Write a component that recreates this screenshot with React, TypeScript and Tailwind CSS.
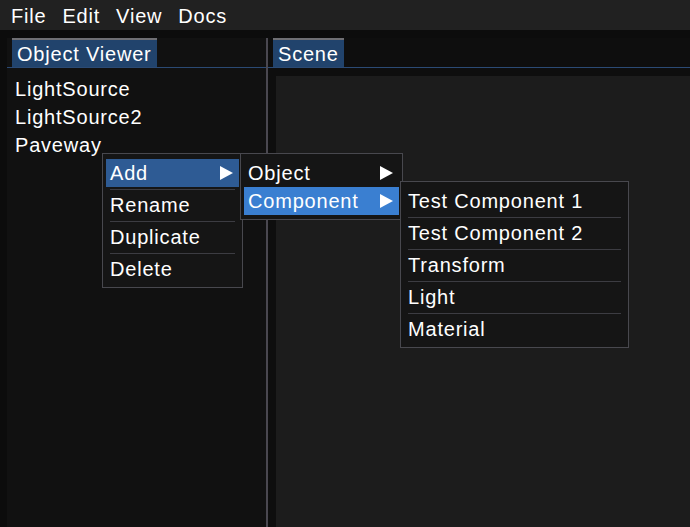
import React from "react";

const font = { fontFamily: '"Liberation Sans", Arial, sans-serif' };

function Arrow() {
  return (
    <svg width="14" height="14" viewBox="0 0 14 14" className="shrink-0">
      <polygon points="1,0 14,7 1,14" fill="#ffffff" />
    </svg>
  );
}

function Sep() {
  return <div className="mt-[2px] mb-[1px] mx-[4px] h-px bg-[#3c3c42]" />;
}

function MenuRow({ label, arrow, active }: { label: string; arrow?: boolean; active?: string }) {
  return (
    <div className={`h-[28px] leading-[29px] px-[4px] pr-[6px] flex items-center justify-between ${active ?? ""}`}>
      <span>{label}</span>
      {arrow && <Arrow />}
    </div>
  );
}

function ContextMenus() {
  const addTo = ["Test Component 1", "Test Component 2", "Transform", "Light", "Material"];
  return (
    <>
      <div className="absolute left-[102px] top-[153px] w-[141px] h-[135px] border border-[#48484e] bg-[#151515] px-[3px] pt-[5px]">
        <MenuRow label="Add" arrow active="bg-[#2e5b94]" />
        <Sep />
        <MenuRow label="Rename" />
        <Sep />
        <MenuRow label="Duplicate" />
        <Sep />
        <MenuRow label="Delete" />
      </div>
      <div className="absolute left-[240px] top-[153px] w-[163px] h-[67px] border border-[#48484e] bg-[#151515] px-[3px] pt-[5px]">
        <MenuRow label="Object" arrow />
        <MenuRow label="Component" arrow active="bg-[#3a7fd1]" />
      </div>
      <div className="absolute left-[400px] top-[181px] w-[229px] h-[167px] border border-[#48484e] bg-[#151515] px-[3px] pt-[5px]">
        {addTo.map((t, i) => (
          <div key={t}>
            {i > 0 && <Sep />}
            <MenuRow label={t} />
          </div>
        ))}
      </div>
    </>
  );
}

export default function App() {
  return (
    <div
      className="relative w-[690px] h-[527px] overflow-hidden bg-[#0c0c0c] text-white text-[20px] tracking-[0.8px] flex flex-col"
      style={font}
    >
      <div className="h-[30px] shrink-0 bg-[#212121] flex items-center gap-[16px] px-[11px] pt-[2px]">
        <span>File</span>
        <span>Edit</span>
        <span>View</span>
        <span>Docs</span>
      </div>

      <div className="flex flex-1 pt-[8px]">
        <div className="ml-[7px] w-[259px] bg-[#111111] flex flex-col">
          <div className="border-b border-[#2b4a74] h-[30px] flex items-end">
            <div className="ml-[5px] h-[29px] leading-[28px] bg-[#21436c] border-t-2 border-[#6f6f74] px-[5px]">
              Object Viewer
            </div>
          </div>
          <div className="pt-[7px] pl-[8px] flex flex-col">
            <div className="h-[28px] leading-[29px]">LightSource</div>
            <div className="h-[28px] leading-[29px]">LightSource2</div>
            <div className="h-[28px] leading-[29px]">Paveway</div>
          </div>
        </div>

        <div className="w-[2px] bg-[#4a4850]" />

        <div className="flex-1 flex flex-col bg-[#0e0e0e]">
          <div className="border-b border-[#2b4a74] h-[30px] flex items-end">
            <div className="ml-[5px] h-[29px] leading-[28px] bg-[#21436c] border-t-2 border-[#6f6f74] px-[5px]">
              Scene
            </div>
          </div>
          <div className="flex-1 mt-[8px] ml-[8px] bg-[#1c1c1c]" />
        </div>
      </div>

      <ContextMenus />
    </div>
  );
}
